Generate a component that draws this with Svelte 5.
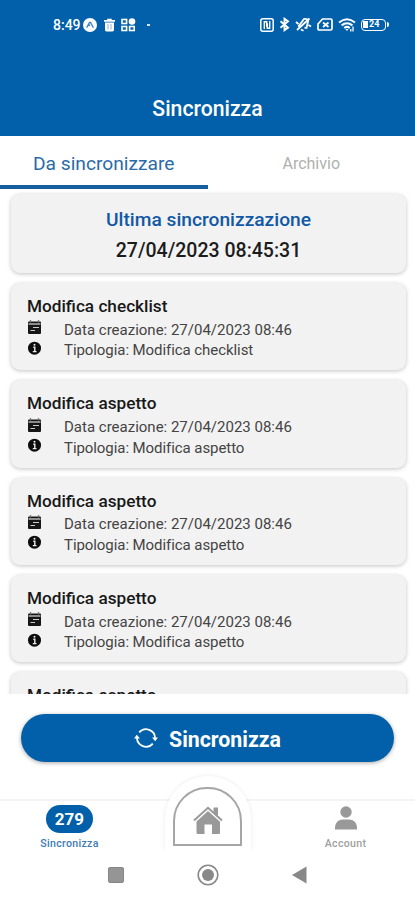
<script>
  const tabs = ["Da sincronizzare", "Archivio"];
  let activeTab = $state(0);

  const lastSync = "27/04/2023 08:45:31";
  const pending = 279;

  const items = [
    { title: "Modifica checklist", date: "27/04/2023 08:46" },
    { title: "Modifica aspetto", date: "27/04/2023 08:46" },
    { title: "Modifica aspetto", date: "27/04/2023 08:46" },
    { title: "Modifica aspetto", date: "27/04/2023 08:46" },
    { title: "Modifica aspetto", date: "27/04/2023 08:46" },
  ];
</script>

<div class="screen">
  <header>
    <div class="status">
      <div class="status-left">
        <span class="clock">8:49</span>
        <svg width="14" height="14" viewBox="0 0 14 14">
          <circle cx="7" cy="7" r="7" fill="#fff" />
          <path d="M3.6 9.8 6.5 4.4h1l2.9 5.4M5.8 8.2 7 6.6" fill="none" stroke="#3d7fb9" stroke-width="1.3" />
        </svg>
        <svg class="trash" width="11" height="14" viewBox="0 0 11 14">
          <path d="M0 2h3.2V.7h4.6V2H11v1.7H0zM1 4.6h9V12q0 1.4-1.4 1.4H2.4Q1 13.4 1 12z" fill="#fff" />
          <path d="M4 6v5.5M7 6v5.5" stroke="#8db5d9" />
        </svg>
        <svg class="apps" width="15" height="14" viewBox="0 0 15 14">
          <g fill="none" stroke="#fff" stroke-width="1.6">
            <rect x="1" y="1.5" width="4.6" height="4" />
            <rect x="1" y="8.5" width="4.6" height="4" />
            <rect x="8.6" y="8.5" width="4.6" height="4" />
          </g>
          <circle cx="11" cy="3.5" r="3.3" fill="#fff" />
        </svg>
        <span class="more"></span>
      </div>
      <div class="status-right">
        <svg width="14" height="14" viewBox="0 0 14 14" fill="none" stroke="#fff">
          <rect x=".8" y=".8" width="12.4" height="12.4" rx="2" stroke-width="1.5" />
          <path d="M4.3 11V3.7h2.4v5M9.7 3v7.3H7.3v-5" stroke-width="1.4" />
        </svg>
        <svg width="11" height="15" viewBox="0 0 11 15" fill="none" stroke="#fff" stroke-width="1.9">
          <path d="M1.5 4.2 9 10.6 5.5 13.2V1.8L9 4.4 1.5 10.8" />
        </svg>
        <svg width="17" height="15" viewBox="0 0 17 15" fill="none" stroke="#fff" stroke-width="1.8">
          <path d="M5.2 10.5 3.8 9 8.800 2.2q3.200-1 4.400 1.600L11.500 11l-2-.3M6 12.500l2.500 1.200M2 13 14.500 1.500M1 5l2.500 2M13.500 8l2.500 1.500" />
        </svg>
        <svg width="16" height="13" viewBox="0 0 16 13" fill="none" stroke="#fff" stroke-width="1.7">
          <path d="M5.500 1h8.200q1.300 0 1.300 1.300v8.400q0 1.300-1.300 1.300H2.300Q1 12 1 10.700V6z" />
          <path d="m6 4.500 5.500 4.500M11.500 4.500 6 9" />
        </svg>
        <svg width="18" height="14" viewBox="0 0 18 14" fill="none" stroke="#fff" stroke-width="2">
          <path d="M1 4.500q8-6.500 16 0M3.600 7.400q5.400-4.400 10.800 0M6.200 10q2.800-2.200 5.600 0" />
          <path d="m7.300 11 1.700 2 1.500-2z" fill="#fff" stroke="none" />
          <path d="M15 8.500v5M12.800 11v2.500" stroke-width="1.300" />
        </svg>
        <div class="battery"><span class="level"></span><b>24</b></div>
      </div>
    </div>
    <h1>Sincronizza</h1>
  </header>

  <nav class="tabs">
    {#each tabs as tab, i}
      <button class:active={activeTab === i} onclick={() => (activeTab = i)}>
        <span>{tab}</span>
      </button>
    {/each}
  </nav>

  <main>
    <section class="card summary">
      <h2>Ultima sincronizzazione</h2>
      <p>{lastSync}</p>
    </section>
    {#each items as item}
      <article class="card item">
        <h3>{item.title}</h3>
        <div class="row">
          <svg width="15" height="15" viewBox="0 0 15 15">
            <path d="M1 2.5Q1 1.5 2 1.5h11q1 0 1 1V13q0 1-1 1H2q-1 0-1-1z" fill="#161616" />
            <path d="M1.500 4h12" stroke="#ddd" stroke-width="1.200" />
            <path d="M3.500 0v2.500M11.500 0v2.500" stroke="#777" stroke-width="1.300" />
            <path d="M6 7.500h6M3.500 10.500h4.500" stroke="#ccc" stroke-width="1.200" />
          </svg>
          <span>Data creazione: {item.date}</span>
        </div>
        <div class="row">
          <svg width="15" height="15" viewBox="0 0 15 15">
            <circle cx="7.500" cy="7.200" r="6.500" fill="#0c0c0c" />
            <path d="M6.300 6.300h1.500v4.200M5.800 10.600h3.700" fill="none" stroke="#eee" stroke-width="1.400" />
            <circle cx="7.500" cy="3.800" r="1" fill="#eee" />
          </svg>
          <span class="type">Tipologia: {item.title}</span>
        </div>
      </article>
    {/each}
  </main>

  <div class="action">
    <button class="sync">
      <svg width="24" height="22" viewBox="0 0 24 22">
        <g fill="none" stroke="#fff" stroke-width="1.800">
          <path d="M5.200 5.400A9 9 0 0 1 21 11.500" />
          <path d="M18.800 16.600A9 9 0 0 1 3 10.500" />
        </g>
        <path d="M18 10.500h6l-2.800 3.800zM0 11.500h6L2.800 7.700z" fill="#fff" />
      </svg>
      <span>Sincronizza</span>
    </button>
  </div>

  <footer>
    <div class="entry current">
      <span class="badge">{pending}</span>
      <small>Sincronizza</small>
    </div>
    <div class="home">
      <div class="arch">
        <svg width="30" height="29" viewBox="0 0 30 29">
          <path d="M20.500 1.500H25v9l-4.500-4z" fill="#999" />
          <path d="M1 14.500 15 1.800l14 12.700" fill="none" stroke="#999" stroke-width="2" />
          <path d="M15 5 27 15.800V27q0 1-1 1h-7v-9.500h-7.500V28H5q-1.500 0-1.500-1V15.500z" fill="#999" />
        </svg>
      </div>
    </div>
    <div class="entry">
      <svg width="22" height="24" viewBox="0 0 22 24" fill="#999">
        <circle cx="11" cy="6" r="5.700" />
        <path d="M0 23.500v-2.500q1-7.500 8-7.500h6q7 0 8 7.500v2.500z" />
      </svg>
      <small>Account</small>
    </div>
  </footer>

  <div class="system">
    <svg width="16" height="16" viewBox="0 0 16 16">
      <rect x=".5" y=".5" width="15" height="15" rx="1.500" fill="#959595" stroke="#858585" />
    </svg>
    <svg width="22" height="22" viewBox="0 0 22 22">
      <circle cx="11" cy="11" r="9.800" fill="none" stroke="#888" stroke-width="1.600" />
      <circle cx="11" cy="11" r="6" fill="#888" />
    </svg>
    <svg width="15" height="18" viewBox="0 0 15 18">
      <path d="M0 9 14.500.5v17z" fill="#888" />
    </svg>
  </div>
</div>

<style>
  :global(body) {
    margin: 0;
  }

  .screen {
    display: flex;
    flex-direction: column;
    width: 415px;
    height: 900px;
    overflow: hidden;
    background: #fff;
    font-family: Roboto, "Liberation Sans", sans-serif;
  }

  svg {
    display: block;
    flex: none;
  }

  h1,
  h2,
  h3,
  p {
    margin: 0;
    font-weight: 500;
  }

  button {
    border: 0;
    padding: 0;
    background: none;
    font-family: inherit;
  }

  header {
    flex: none;
    height: 136px;
    box-sizing: border-box;
    padding-top: 14px;
    background: #0160a9;
    color: #fff;
  }

  .status {
    display: flex;
    justify-content: space-between;
    height: 21px;
    padding: 0 27px 0 53px;
  }

  .status-left,
  .status-right {
    display: flex;
    align-items: center;
  }

  .status-right {
    gap: 5px;
  }

  .clock {
    width: 30px;
    font-size: 14px;
    font-weight: 500;
  }

  .trash {
    margin-left: 7px;
  }

  .apps {
    margin-left: 6px;
  }

  .more {
    width: 3px;
    height: 2px;
    margin-left: 11px;
    background: #d5e4f1;
  }

  .battery {
    display: flex;
    align-items: center;
    position: relative;
    width: 25px;
    height: 12px;
    box-sizing: border-box;
    border: 1.5px solid #fff;
    border-radius: 4px;
    margin-right: 2px;
  }

  .battery::after {
    content: "";
    position: absolute;
    right: -4px;
    width: 2px;
    height: 5px;
    border-radius: 0 2px 2px 0;
    background: #fff;
  }

  .level {
    width: 5px;
    height: 7px;
    margin-left: 1px;
    background: #fff;
  }

  .battery b {
    margin-left: 1px;
    font-size: 9px;
    line-height: 9px;
  }

  h1 {
    margin-top: 61px;
    font-size: 21.2px;
    line-height: 26px;
    text-align: center;
  }

  .tabs {
    display: flex;
    flex: none;
    height: 53px;
  }

  .tabs button {
    flex: 1;
    box-sizing: border-box;
    border-bottom: 4px solid transparent;
    padding-top: 5px;
    font-size: 16px;
    color: #b0b0b0;
  }

  .tabs .active {
    border-color: #155f9f;
    font-size: 19.2px;
    color: #2a6ba8;
  }

  main {
    flex: none;
    height: 505px;
    box-sizing: border-box;
    padding: 5px 9px 0 11px;
    overflow: hidden;
  }

  .card {
    box-sizing: border-box;
    border-radius: 9px;
    background: #f2f2f2;
    box-shadow: 0 1px 4px rgba(0, 0, 0, 0.24);
  }

  .summary {
    height: 79px;
    padding-top: 12px;
    text-align: center;
  }

  .summary h2 {
    font-size: 19.2px;
    line-height: 27px;
    color: #1158a5;
  }

  .summary p {
    font-size: 19.5px;
    line-height: 35px;
    color: #1c1c1c;
  }

  .item {
    height: 87.3px;
    margin-top: 10px;
    padding: 12px 16px 0;
  }

  .item h3 {
    font-size: 17.2px;
    line-height: 23px;
    color: #181818;
  }

  .row {
    display: flex;
    align-items: center;
    gap: 22px;
    height: 20.5px;
    font-size: 15px;
    color: #444;
  }

  .row svg {
    margin-top: -1px;
  }

  .row span {
    margin-top: 3px;
  }

  .row .type {
    letter-spacing: -0.07px;
  }

  .action {
    flex: none;
    height: 105px;
    box-sizing: border-box;
    padding: 20px 21px 0;
  }

  .sync {
    display: flex;
    align-items: center;
    justify-content: center;
    gap: 11px;
    width: 373px;
    height: 48px;
    border-radius: 24px;
    background: #0160a9;
    box-shadow: 0 1px 4px rgba(0, 0, 0, 0.35);
    color: #fff;
    font-size: 21.3px;
    font-weight: 700;
  }

  .sync span {
    margin-top: 2px;
  }

  footer {
    display: flex;
    flex: none;
    justify-content: space-between;
    height: 51px;
    box-sizing: border-box;
    border-top: 2px solid #f4f4f4;
  }

  .entry {
    display: flex;
    flex-direction: column;
    align-items: center;
    width: 139px;
    padding-top: 5px;
    color: #a0a0a0;
  }

  .entry small {
    margin-top: 8px;
    font-size: 10.6px;
    line-height: 12px;
    font-weight: 500;
    letter-spacing: 0.3px;
  }

  .badge {
    width: 47px;
    height: 28px;
    margin-top: -1px;
    border-radius: 14px;
    background: #0160a9;
    color: #fff;
    font-size: 17px;
    font-weight: 700;
    line-height: 29px;
    text-align: center;
  }

  .current small {
    margin-top: 5px;
    color: #3d7cb3;
  }

  .home {
    display: flex;
    justify-content: center;
    width: 86px;
    height: 74px;
    box-sizing: border-box;
    margin-top: -25px;
    padding-top: 11px;
    border-radius: 43px 43px 0 0;
    background: #fff;
    box-shadow: 0 0 5px rgba(0, 0, 0, 0.08);
    clip-path: inset(-6px -6px 0);
  }

  .arch {
    display: flex;
    justify-content: center;
    width: 69px;
    height: 59px;
    box-sizing: border-box;
    padding-top: 17px;
    border: 2px solid #a6a6a6;
    border-radius: 34px 34px 0 0;
  }

  .system {
    display: flex;
    align-items: center;
    justify-content: space-between;
    height: 50px;
    padding: 0 108px;
  }
</style>
